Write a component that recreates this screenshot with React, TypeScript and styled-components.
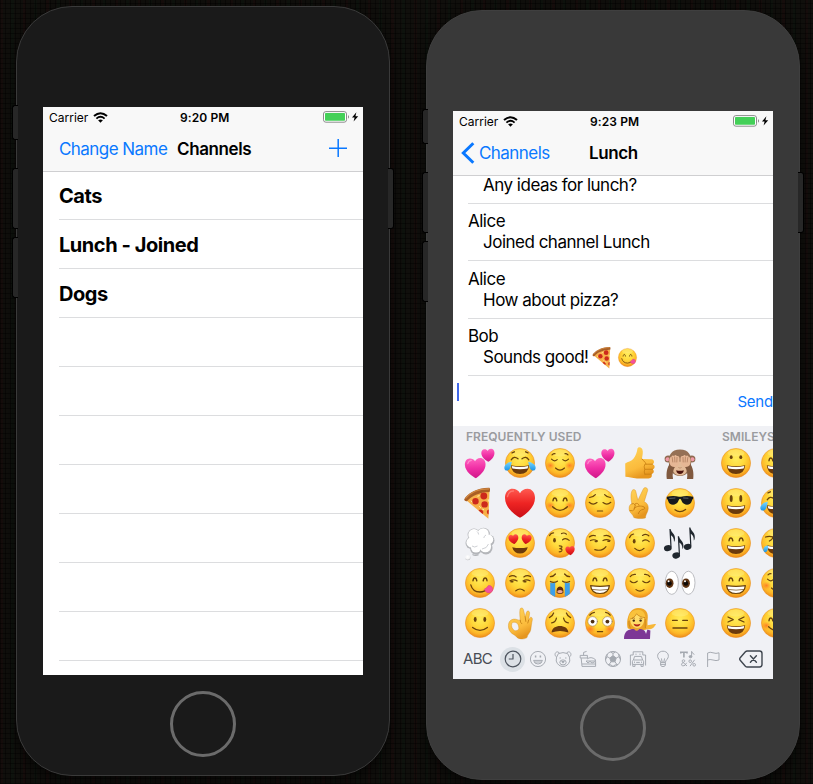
import React from "react";
import styled, { createGlobalStyle } from "styled-components";

const GlobalStyle = createGlobalStyle`
  * { box-sizing: border-box; }
  body {
    margin: 0;
    background: #0d0c0a;
    font-family: Inter, "Liberation Sans", sans-serif;
    color: #000;
    overflow: hidden;
  }
`;

const BLUE = "#0a78ff";

/* ---------- desktop and device ---------- */

const Desktop = styled.main`
  display: flex;
  align-items: flex-start;
  gap: 36px;
  width: 813px;
  height: 784px;
  padding: 6px 0 0 16px;
  background:
    repeating-linear-gradient(90deg, rgba(0, 0, 0, 0.4) 0 1px, transparent 1px 5px),
    repeating-linear-gradient(0deg, rgba(0, 0, 0, 0.4) 0 1px, transparent 1px 5px),
    repeating-linear-gradient(90deg, rgba(60, 0, 10, 0.13) 0 3px, transparent 3px 11px, rgba(0, 40, 20, 0.13) 11px 14px, transparent 14px 23px),
    #100f0c;
`;

const Device = styled.section<{ $body: string; $edge: string; $drop?: number }>`
  position: relative;
  flex: none;
  display: flex;
  flex-direction: column;
  align-items: center;
  width: 374px;
  height: 770px;
  margin-top: ${(p) => p.$drop ?? 0}px;
  padding-top: 100px;
  border: 1px solid ${(p) => p.$edge};
  border-radius: 56px;
  background: ${(p) => p.$body};
  box-shadow: 0 6px 14px rgba(0, 0, 0, 0.55);
`;

const SideButton = styled.span<{ $top: number; $height: number; $right?: boolean }>`
  position: absolute;
  top: ${(p) => p.$top}px;
  ${(p) => (p.$right ? "right: -5px;" : "left: -5px;")}
  width: 6px;
  height: ${(p) => p.$height}px;
  background: #272727;
  border: 1px solid #000;
  ${(p) => (p.$right ? "border-left: 0; border-radius: 0 3px 3px 0;" : "border-right: 0; border-radius: 3px 0 0 3px;")}
`;

const Screen = styled.div`
  display: flex;
  flex-direction: column;
  width: 320px;
  height: 568px;
  flex: none;
  background: #fff;
  overflow: hidden;
`;

const HomeButton = styled.span`
  width: 66px;
  height: 66px;
  margin-top: 16px;
  border: 3px solid #6b6b6b;
  border-radius: 50%;
`;

/* ---------- top bar ---------- */

const TopBar = styled.header`
  flex: none;
  height: 64px;
  background: #f8f8f8;
  box-shadow: 0 1px 0 #cfcfd1;
  z-index: 1;
`;

const StatusRow = styled.div`
  display: grid;
  grid-template-columns: 131px 1fr 44px;
  align-items: center;
  height: 20px;
  padding-left: 6px;
  font-size: 12px;
`;

const Carrier = styled.span`
  display: flex;
  align-items: center;
  gap: 5px;
  letter-spacing: 0;
`;

const Clock = styled.span`
  font-weight: 600;
  letter-spacing: 0.1px;
`;

const NavRow = styled.div<{ $inset: number }>`
  display: flex;
  align-items: center;
  height: 44px;
  padding: 0 16px 0 ${(p) => p.$inset}px;
`;

const NavLink = styled.a<{ $width: number }>`
  width: ${(p) => p.$width}px;
  font-size: 17px;
  letter-spacing: -0.55px;
  white-space: nowrap;
  color: ${BLUE};
`;

const NavTitle = styled.h1`
  margin: 0;
  font-size: 17px;
  font-weight: 600;
  letter-spacing: -0.4px;
`;

const PlusIcon = styled.svg`
  margin: 0 0 2px auto;
`;

const StatusBar = ({ time }: { time: string }) => (
  <StatusRow>
    <Carrier>
      Carrier
      <svg width="15" height="11" viewBox="0 0 15 11" fill="none" stroke="#000">
        <path d="M1 4.1 Q7.5 -1.7 14 4.1" strokeWidth="2" />
        <path d="M3.4 6.6 Q7.5 3.1 11.6 6.6" strokeWidth="1.9" />
        <path d="M5.1 8.3 Q7.5 6.5 9.9 8.3 L7.5 10.7Z" fill="#000" stroke="none" />
      </svg>
    </Carrier>
    <Clock>{time}</Clock>
    <svg width="40" height="12" viewBox="0 0 40 12">
      <rect x="4.5" y="0.6" width="23" height="10.6" rx="2.4" fill="#fff" stroke="#8b8b8b" />
      <rect x="6" y="2.1" width="20" height="7.6" rx="0.8" fill="#44d058" />
      <path d="M29 4 Q31.2 5.9 29 7.8Z" fill="#8b8b8b" />
      <path d="M37.4 1.2 L33 6.5 H35.6 L34.6 10.6 L39.2 5.2 H36.4Z" fill="#000" />
    </svg>
  </StatusRow>
);

/* ---------- channel list ---------- */

const ChannelRow = styled.div`
  flex: none;
  display: flex;
  align-items: center;
  height: 49px;
  margin-left: 16px;
  padding-top: 1px;
  border-bottom: 1px solid #dcdddf;
  font-size: 20px;
  font-weight: 700;
  letter-spacing: -0.45px;
`;

const channels = ["Cats", "Lunch - Joined", "Dogs", "", "", "", "", "", "", ""];

/* ---------- conversation ---------- */

const Message = styled.div<{ $height: number }>`
  flex: none;
  display: flex;
  flex-direction: column;
  justify-content: flex-end;
  height: ${(p) => p.$height}px;
  margin-left: 15px;
  padding-bottom: 8px;
  border-bottom: 1px solid #dcdddf;
  font-size: 17px;
  line-height: 21px;
  letter-spacing: -0.5px;
`;

const MessageText = styled.span`
  display: flex;
  align-items: center;
  height: 20px;
  padding-left: 15px;
`;

const InlineEmoji = styled.svg`
  width: 25px;
  height: 25px;
  margin: 1px 0 0 3px;
  flex: none;

  & + & {
    margin-left: -1px;
  }
`;

const MessageList = styled.div`
  display: flex;
  flex-direction: column;
  padding-top: 1px;
`;

const Composer = styled.div`
  flex: none;
  display: flex;
  justify-content: space-between;
  height: 50px;
  padding: 7px 0 0 4px;
`;

const Caret = styled.span`
  width: 2px;
  height: 18px;
  background: #4168e8;
`;

const SendButton = styled.button`
  align-self: flex-start;
  margin-top: 10px;
  padding: 0;
  border: 0;
  background: none;
  font: 15px/18px Inter, sans-serif;
  letter-spacing: -0.2px;
  color: ${BLUE};
`;

/* ---------- emoji keyboard ---------- */

const Keyboard = styled.div`
  flex: none;
  display: flex;
  flex-direction: column;
  height: 253px;
  background: #f0f1f5;
`;

const Pages = styled.div`
  display: flex;
  gap: 16px;
  padding-left: 7px;
  overflow: hidden;
`;

const PageTitle = styled.h2`
  height: 17px;
  margin: 0;
  padding: 3px 0 0 6px;
  font-size: 12px;
  line-height: 16px;
  font-weight: 600;
  letter-spacing: 0.05px;
  white-space: nowrap;
  color: #9a9b9f;
`;

const EmojiPage = styled.div<{ $columns: number }>`
  flex: none;
  width: ${(p) => p.$columns * 40}px;
`;

const EmojiGrid = styled.div<{ $columns: number }>`
  display: grid;
  grid-template-columns: repeat(${(p) => p.$columns}, 40px);
  grid-auto-rows: 40px;
`;

const Tabs = styled.div`
  display: flex;
  align-items: center;
  height: 32px;
  padding: 0 10px;
`;

const AbcKey = styled.span`
  width: 37px;
  padding-bottom: 2px;
  font-size: 15px;
  letter-spacing: -0.7px;
  color: #474c54;
`;

const Tab = styled.span<{ $active?: boolean }>`
  display: grid;
  place-items: center;
  width: 25px;
  height: 25px;
  border-radius: 50%;
  color: ${(p) => (p.$active ? "#4d545e" : "#a3a8af")};
  background: ${(p) => (p.$active ? "#dce1e6" : "transparent")};
`;

const DeleteIcon = styled.svg`
  margin-left: auto;
`;

const SharedDefs = styled.svg`
  position: absolute;
  width: 0;
  height: 0;
`;

const INK = "#6b430c";

const GradientDefs = () => (
  <SharedDefs>
    <defs>
      <radialGradient id="face" cx="0.5" cy="0.36" r="0.66">
        <stop offset="0" stopColor="#ffec5a" />
        <stop offset="0.45" stopColor="#ffd83a" />
        <stop offset="0.76" stopColor="#fdb728" />
        <stop offset="1" stopColor="#ea8418" />
      </radialGradient>
      <linearGradient id="skin" x1="0" y1="0" x2="0.4" y2="1">
        <stop offset="0" stopColor="#ffd55a" />
        <stop offset="0.7" stopColor="#fbbb3c" />
        <stop offset="1" stopColor="#e6961f" />
      </linearGradient>
      <linearGradient id="red" x1="0" y1="0" x2="0" y2="1">
        <stop offset="0" stopColor="#ff5a50" />
        <stop offset="0.5" stopColor="#ee2423" />
        <stop offset="1" stopColor="#c90e16" />
      </linearGradient>
      <linearGradient id="pink" x1="0" y1="0" x2="0" y2="1">
        <stop offset="0" stopColor="#ff63bf" />
        <stop offset="0.5" stopColor="#f02fa5" />
        <stop offset="1" stopColor="#d01889" />
      </linearGradient>
      <radialGradient id="cloud" cx="0.45" cy="0.35" r="0.65">
        <stop offset="0" stopColor="#ffffff" />
        <stop offset="0.7" stopColor="#f4f4f5" />
        <stop offset="1" stopColor="#b9babd" />
      </radialGradient>
      <radialGradient id="blush">
        <stop offset="0" stopColor="#ff5a1f" stopOpacity="0.65" />
        <stop offset="1" stopColor="#ff7a1f" stopOpacity="0" />
      </radialGradient>
      <linearGradient id="tear" x1="0" y1="0" x2="0" y2="1">
        <stop offset="0" stopColor="#7ad7ff" />
        <stop offset="1" stopColor="#1b94e6" />
      </linearGradient>
    </defs>
  </SharedDefs>
);

const Face = ({ children }: { children?: React.ReactNode }) => (
  <>
    <circle cx="20" cy="20" r="14.6" fill="url(#face)" stroke="#e98a1c" strokeWidth="0.5" />
    <ellipse cx="20" cy="10" rx="8.5" ry="3.6" fill="#fff9a8" opacity="0.3" />
    <g fill="none" stroke={INK} strokeWidth="1.3" strokeLinecap="round" strokeLinejoin="round">
      {children}
    </g>
  </>
);

const Heart = ({ x, y, s, fill, tilt = 0 }: { x: number; y: number; s: number; fill: string; tilt?: number }) => (
  <path
    transform={`translate(${x} ${y}) rotate(${tilt}) scale(${s})`}
    d="M0 14.8 C-5 12.4 -15 4.5 -15 -5 C-15 -10.8 -11.6 -14.2 -7.6 -14.2 C-4.2 -14.2 -1.5 -12.6 0 -9.8 C1.5 -12.6 4.2 -14.2 7.6 -14.2 C11.6 -14.2 15 -10.8 15 -5 C15 4.5 5 12.4 0 14.8Z"
    fill={fill}
    stroke="none"
  />
);

const Blush = () => (
  <g stroke="none" fill="url(#blush)">
    <ellipse cx="10.5" cy="22.5" rx="5" ry="4" />
    <ellipse cx="29.5" cy="22.5" rx="5" ry="4" />
  </g>
);

const OvalEyes = ({ y = 16.5, ry = 2.4 }: { y?: number; ry?: number }) => (
  <g fill={INK} stroke="none">
    <ellipse cx="15.2" cy={y} rx="1.45" ry={ry} />
    <ellipse cx="24.8" cy={y} rx="1.45" ry={ry} />
  </g>
);

const ArchEyes = () => (
  <path d="M13 17.8 C13.4 14 16.2 14 16.8 17.8 M23.2 17.8 C23.8 14 26.6 14 27 17.8" strokeWidth="1.4" />
);

const OpenSmile = () => (
  <>
    <path d="M10.8 22.2 Q20 24.4 29.2 22.2 Q28.4 31 20 31 Q11.6 31 10.8 22.2Z" fill="#6b3a0c" stroke="none" />
    <path d="M11.7 23 Q20 24.9 28.3 23 L27.6 25.4 Q20 27 12.4 25.4Z" fill="#fff" stroke="none" />
  </>
);

const Grin = () => (
  <>
    <path d="M10.6 22.6 Q20 24.2 29.4 22.6 Q28.6 30.5 20 30.5 Q11.4 30.5 10.6 22.6Z" fill="#fff" strokeWidth="1.2" />
    <path d="M11.5 26.4 Q20 28 28.5 26.4" strokeWidth="0.7" />
  </>
);

const Tears = () => (
  <g fill="url(#tear)" stroke="none">
    <path d="M11.8 18.8 C8.5 19 4.4 21.6 4.3 25 C4.4 28.4 9 28.4 10.2 25 C10.9 23 11.5 21 11.8 18.8Z" />
    <path d="M28.2 18.8 C31.5 19 35.6 21.6 35.7 25 C35.6 28.4 31 28.4 29.8 25 C29.1 23 28.5 21 28.2 18.8Z" />
  </g>
);

const Note = ({ x, y }: { x: number; y: number }) => (
  <g transform={`translate(${x} ${y})`} fill="#20272e" stroke="none">
    <ellipse cx="0" cy="0" rx="3.9" ry="3" transform="rotate(-15)" />
    <path d="M2.6 -1 L1.6 -19.3 L2.8 -19.3 C3.4 -15.6 7.6 -14.6 7.2 -9.4 C7.1 -7.8 6.8 -7 6.2 -6.2 C6.4 -10 4.8 -12 3.2 -13 L3.8 -1Z" />
  </g>
);

const emoji: Record<string, React.ReactNode> = {
  hearts: (
    <>
      <Heart x={15.4} y={25} s={0.69} fill="url(#pink)" tilt={-3} />
      <Heart x={28} y={12.2} s={0.44} fill="url(#pink)" tilt={-3} />
      <path d="M7.8 20.6 Q8.6 17.6 11.4 17.4" stroke="#ff8ad0" strokeWidth="1.1" fill="none" strokeLinecap="round" />
    </>
  ),
  joy: (
    <>
      <Face>
        <path d="M11.2 16.8 Q14 12.4 18 15.8 M22 15.8 Q26 12.4 28.8 16.8 M12 9.9 L14.4 8.8 M25.6 8.8 L28 9.9" />
        <OpenSmile />
      </Face>
      <Tears />
    </>
  ),
  relaxed: (
    <Face>
      <Blush />
      <path d="M11.5 16.2 Q14.3 19.2 17.2 16.6 M22.8 16.6 Q25.7 19.2 28.5 16.2 M15.5 25 Q20 29.4 24.5 25 M12 11.8 Q13.2 10.5 15 10.6 M25 10.6 Q26.8 10.5 28 11.8" strokeWidth="1.15" />
    </Face>
  ),
  thumb: (
    <>
      <path d="M5.2 20.5 C8 18.7 11 18.4 13.2 16 C16 12.8 17 9 17.4 5.8 C17.8 3.4 22.6 3.5 22.8 8.5 C22.9 11.5 22 14 22 16 L31.5 16.2 C34.6 16.5 34.7 20.4 32.5 21.2 C35.4 22 35.2 25.8 32.6 26.3 C34.6 27.4 34 30.8 31.4 31.2 C32.6 32.8 31.4 35.3 28.5 35.5 L17 35.5 C12 35.3 9 33.8 5.4 33.8Z" fill="url(#skin)" />
      <path d="M32.5 21.2 H25.5 M32.6 26.3 H25 M31.4 31.2 H25 M22 16 C22.4 18 25.6 18 26 21 M24.7 21.5 Q23.5 24 24.8 26.3 Q23.6 29 24.8 31.2" fill="none" stroke="#c67d12" strokeWidth="0.8" strokeLinecap="round" />
    </>
  ),
  monkey: (
    <>
      <circle cx="8.2" cy="16" r="3.6" fill="#8f6a50" />
      <circle cx="31.8" cy="16" r="3.6" fill="#8f6a50" />
      <circle cx="7.6" cy="16.2" r="2" fill="#f19aa8" />
      <circle cx="32.4" cy="16.2" r="2" fill="#f19aa8" />
      <path d="M20 6.6 C29 6.6 31.5 13 31.2 19 C31 27 27 33 20 33 C13 33 9 27 8.8 19 C8.5 13 11 6.6 20 6.6Z" fill="#947055" />
      <ellipse cx="20" cy="25.5" rx="7.5" ry="7" fill="#e3bb98" />
      <path d="M6.8 36 C6 30 7 24 10.5 20 L15.5 23 C12.8 27 12.2 31 13 36Z M33.2 36 C34 30 33 24 29.5 20 L24.5 23 C27.2 27 27.8 31 27 36Z" fill="#80593f" />
      <path d="M9.8 21 C8.6 17 9.6 14 11.4 13.7 Q12.6 11.6 14.1 13 Q15.6 11.2 16.8 13.1 Q19.2 12.4 19.5 15 C20 19.6 18.4 23.6 15 24 C12.5 24.2 10.8 23.4 9.8 21Z M30.2 21 C31.4 17 30.4 14 28.6 13.7 Q27.4 11.6 25.9 13 Q24.4 11.2 23.2 13.1 Q20.8 12.4 20.5 15 C20 19.6 21.6 23.6 25 24 C27.5 24.2 29.2 23.4 30.2 21Z" fill="#e6b795" />
      <path d="M12.2 14.5 L12.8 19 M14.6 14 L14.9 19 M17 14.4 L16.8 19 M27.8 14.5 L27.2 19 M25.4 14 L25.1 19 M23 14.4 L23.2 19 M18.9 24.4 L19.3 25 M21.1 24.4 L20.7 25" stroke="#a87454" strokeWidth="0.7" strokeLinecap="round" />
      <path d="M16.2 27.2 Q20 28.4 23.8 27.2 Q23.2 31 20 31 Q16.8 31 16.2 27.2Z" fill="#4c150f" />
    </>
  ),
  pizza: (
    <>
      <path d="M6.5 17.5 L28.4 35.8 L29.5 8.5 Q15 9 6.5 17.5Z" fill="#f7b048" />
      <path d="M4.2 16.3 C7 11 17 4.6 29.4 4.8 C30.2 5.5 30.3 8 29.5 8.9 C19 9.4 12 12.5 7 18.2 C5.6 18.6 4.3 17.7 4.2 16.3Z" fill="#a95e24" />
      <path d="M5.5 15.5 C10 9.5 19 5.8 29 5.8" stroke="#d28a43" strokeWidth="1.2" fill="none" />
      <g fill="#cd2a1c">
        <circle cx="23.8" cy="13" r="3.4" />
        <circle cx="15.5" cy="18.3" r="3.2" />
        <circle cx="24.6" cy="21.4" r="3.2" />
        <path d="M28.8 26.4 A2.6 2.6 0 0 0 28.6 31.4Z" />
        <path d="M18.6 27.6 A2.4 2.4 0 0 1 22.6 30.9Z" />
      </g>
      <path d="M17.8 13.2 l1.4 -.5 M19.5 23.5 l1 1 M28.2 16.6 l.2 1.6 M11 18 l1 .8 M22.6 26.2 l1 .4" stroke="#fff0a8" strokeWidth="1" strokeLinecap="round" />
    </>
  ),
  heart: (
    <>
      <Heart x={20} y={20} s={1} fill="url(#red)" />
      <path d="M7.5 13.5 Q8.5 8.2 13.4 8" stroke="#ff9d94" strokeWidth="1.4" fill="none" strokeLinecap="round" opacity="0.55" />
    </>
  ),
  blush: (
    <Face>
      <Blush />
      <ArchEyes />
      <path d="M12.6 23.7 Q20 31 27.4 23.7" />
    </Face>
  ),
  pensive: (
    <Face>
      <path d="M9.2 19.3 Q13 22.6 17 19.6 M23 19.6 Q27 22.6 30.8 19.3 M9.6 14.5 Q13.3 14.2 15.4 11.6 M24.6 11.6 Q26.7 14.2 30.4 14.5 M17.4 28 H22.6" strokeWidth="1.2" />
    </Face>
  ),
  peace: (
    <>
      <path d="M11.8 20.8 C10.8 15.5 10.6 11.5 11.8 8.2 C12.6 5.8 15.6 6.2 15.9 8.8 L17.9 17.2 L23.4 5.8 C24.6 3.6 28.2 4.6 27.6 7.7 L24.2 18.8 C28.3 20.5 29 24.6 27.6 28.4 C26.5 31 25.6 32.2 25.4 35 C21 36 16.5 35.7 13.8 34.5 C13.2 31.5 9.8 30 9.2 26.8 C8.8 24 9.5 21.4 11.8 20.8Z" fill="url(#skin)" stroke="#d18a1d" strokeWidth="0.4" />
      <path d="M11.8 20.8 Q14 19.6 15.2 22 M15.2 20.8 Q18 19.2 19 22.2 M10 27.6 Q13 28.6 14.4 26.4 L15.2 22 M14 25.2 C17 23 21 22.4 24.2 24 Q25.6 25.8 23.6 26.4 Q19.5 26.6 18.4 30.6" fill="none" stroke="#c27a12" strokeWidth="0.8" strokeLinecap="round" />
    </>
  ),
  cool: (
    <Face>
      <path d="M15 26.8 Q20 30.6 25.6 26.4" />
      <path d="M6.8 13.8 Q13.5 12.3 19 13.8 H21 Q26.5 12.3 33.2 13.8 V15.8 Q32.2 16 31.8 18 C31 22.5 24 23 21.9 18.5 Q21 15.8 20 15.8 Q19 15.8 18.1 18.5 C16 23 9 22.5 8.2 18 Q7.8 16 6.8 15.8Z" fill="#15191d" stroke="none" />
      <path d="M9.6 15.4 L15 15 M23.5 15 L28 15.2" stroke="#59626a" strokeWidth="1" />
    </Face>
  ),
  thought: (
    <>
      <g fill="#b4b6ba">
        <circle cx="14" cy="12" r="6.4" /><circle cx="23.5" cy="11" r="6.3" /><circle cx="28.6" cy="17.4" r="5.9" />
        <circle cx="11.4" cy="20" r="5.9" /><circle cx="16" cy="25.9" r="5.8" /><circle cx="26" cy="25" r="6.5" />
      </g>
      <g fill="#fff">
        <circle cx="14" cy="11.7" r="5.7" /><circle cx="23.2" cy="10.7" r="5.5" /><circle cx="28.2" cy="16.5" r="5" />
        <circle cx="11.6" cy="19.4" r="5.2" /><circle cx="16" cy="24.6" r="5" /><circle cx="25.4" cy="23.6" r="5.7" /><circle cx="19.6" cy="17.8" r="8" />
      </g>
      <path d="M12 23 Q14.5 25 17.5 23 M22 26 Q27 25.5 28.5 21 M17 8.5 Q18.5 9.5 18.6 11.5 M26 12 Q24 13 23.8 15" stroke="#cfd1d5" strokeWidth="1" fill="none" />
      <circle cx="7.8" cy="34.6" r="2.6" fill="url(#cloud)" />
      <path d="M12.5 31.4 q3 1.8 6 .2" stroke="#b0b2b6" strokeWidth="1.2" fill="none" />
    </>
  ),
  heartEyes: (
    <Face>
      <Heart x={13.6} y={16.2} s={0.33} fill="url(#red)" tilt={-8} />
      <Heart x={26.4} y={16.2} s={0.33} fill="url(#red)" tilt={8} />
      <path d="M12.2 24.2 Q20 26 27.8 24.2 Q26 30.6 20 30.6 Q14 30.6 12.2 24.2Z" fill="#6b3a0c" stroke="none" />
    </Face>
  ),
  kiss: (
    <Face>
      <ellipse cx="14.5" cy="17.2" rx="1.4" ry="2.3" fill={INK} stroke="none" />
      <path d="M22.6 16.8 Q25.6 14.2 29.2 17.4 M9.6 12.6 Q10.8 9.8 13.6 9.8 M21.5 10.6 Q24 9.2 26.5 11.2 M19.3 22.8 Q22.6 22.8 21.8 24.6 Q21 25.6 19.8 25.6 Q22.6 25.8 21.8 27.8 Q21.2 29 19.2 28.8" strokeWidth="1.15" />
      <Heart x={30.2} y={27.6} s={0.31} fill="url(#red)" tilt={-6} />
    </Face>
  ),
  smirk: (
    <Face>
      <path d="M10.5 17.6 Q14 15.8 17.4 18 M23 17.6 Q26.5 15.8 30 17.6 M9.4 14 Q12 11.4 15.4 12.8 M24 12.8 Q27.6 11.4 30.4 14 M14.8 26.6 Q22 28.8 26 23.6" strokeWidth="1.15" />
      <path d="M15.4 18.4 h1.4 M28 18.2 h1.4" strokeWidth="1.6" />
    </Face>
  ),
  wink: (
    <Face>
      <ellipse cx="14.2" cy="18.2" rx="1.4" ry="2.2" fill={INK} stroke="none" />
      <path d="M22.6 18 Q26 15.6 29.2 18.6 M9.6 14.6 Q10.6 11.6 13.6 11 M22.5 12.4 Q26 10.2 28.8 12.8 M14.8 25.4 Q19.4 29.8 24 25.4" strokeWidth="1.2" />
    </Face>
  ),
  notes: (
    <>
      <Note x={7.8} y={25.2} />
      <Note x={16.2} y={32.5} />
      <Note x={27.6} y={23.8} />
    </>
  ),
  yum: (
    <Face>
      <ArchEyes />
      <path d="M10.8 21.8 Q12.6 28.8 20 29 Q24.6 29 27.5 25.5" />
      <path d="M24.4 26.2 Q26.6 25.4 28.4 22.6 C31.2 22 33.6 25 32.4 28 C31 30.4 27.4 30.4 25.6 28.6Z" fill="#f4519b" stroke="#d93b82" strokeWidth="0.5" />
    </Face>
  ),
  unamused: (
    <Face>
      <path d="M10 17.8 Q13.5 15.8 17.2 18 M23 18 Q26.5 15.8 30 17.8 M9.6 13.6 Q13 11.6 16.2 14 M23.8 14 Q27 11.6 30.4 13.6 M15.8 27.8 Q20 24.2 24.2 27.8" strokeWidth="1.15" />
      <path d="M11 18.8 h1.8 M24 18.8 h1.8" strokeWidth="1.6" />
    </Face>
  ),
  sob: (
    <Face>
      <path d="M10.4 18.5 Q14 20.4 17.4 18.2 M22.6 18.2 Q26 20.4 29.6 18.5 M10.4 13.6 Q13.6 13.4 15.4 11 M24.6 11 Q26.4 13.4 29.6 13.6" />
      <path d="M10.2 19.5 Q12.8 20.8 15.2 19.6 V33.7 Q12.4 32.8 10.2 30.8Z M24.8 19.6 Q27.2 20.8 29.8 19.5 V30.8 Q27.4 32.8 24.8 33.7Z" fill="#3d9fe8" stroke="none" />
      <path d="M16.6 30 Q16 23.4 20 23.4 Q24 23.4 23.4 30 Q20 31.8 16.6 30Z" fill="#5f2c0a" stroke="none" />
      <path d="M17.4 28 Q20 26 22.6 28 L22.5 29.6 Q20 30.8 17.5 29.6Z" fill="#e8a79a" stroke="none" />
    </Face>
  ),
  grin: (
    <Face>
      <ArchEyes />
      <Grin />
    </Face>
  ),
  relieved: (
    <Face>
      <path d="M10.2 18 Q13.6 21.4 17.2 18.2 M22.8 18.2 Q26.4 21.4 29.8 18 M10.2 13.6 Q12 11 15.4 11.4 M24.6 11.4 Q28 11 29.8 13.6 M16 26.6 Q20 29.8 24 26.6" strokeWidth="1.15" />
    </Face>
  ),
  eyes: (
    <>
      <g fill="#fff" stroke="#b4b6ba" strokeWidth="0.9">
        <ellipse cx="11.8" cy="19.8" rx="6.6" ry="11.6" />
        <ellipse cx="28.4" cy="19.8" rx="6.6" ry="11.6" />
      </g>
      <g fill="#5f3413">
        <ellipse cx="9.6" cy="20.2" rx="3.9" ry="4.8" />
        <ellipse cx="26" cy="20.2" rx="3.9" ry="4.8" />
      </g>
      <g fill="#0e0906">
        <circle cx="9.4" cy="20.4" r="2.4" />
        <circle cx="25.8" cy="20.4" r="2.4" />
      </g>
      <circle cx="8.6" cy="18.2" r="1" fill="#fff" />
      <circle cx="25" cy="18.2" r="1" fill="#fff" />
    </>
  ),
  smile: (
    <Face>
      <OvalEyes />
      <path d="M12.6 24.4 Q20 30.2 27.4 24.4" />
    </Face>
  ),
  okHand: (
    <>
      <path
        d="M20.2 17.2 C20 13.4 19.4 10 20 6.4 C20.4 4.4 23 4.6 23.4 6.6 L25.2 14 C26 11.6 26 9.2 27.2 8.2 C28.6 7.4 29.8 8.8 29.6 10.4 L28.6 17.2 C29.4 16 29.8 14.4 30.8 14.2 C32 14.2 32.6 15.6 32.3 17 C31.6 20.4 31.4 22 31 25 C30.8 29 28.6 30.6 27.6 32.6 L27 34.6 C24 36.6 19.4 36.2 17 34.4 C15.6 32 12.4 31.4 10.6 29.2 C8.4 26.6 8 23 8.8 20 C9.6 17.2 13 15.6 15.6 16.2 C17.6 16.6 19 17.4 20.2 17.2Z M11.8 20.6 C11 23 12 26 14.4 27.4 C16.2 28.2 18.2 27.6 18.8 25.8 C19 23.4 18.2 21.2 16.8 20 C15.2 18.8 12.4 18.8 11.8 20.6Z"
        fill="url(#skin)" fillRule="evenodd" stroke="#d18a1d" strokeWidth="0.4"
      />
      <path d="M25.2 14 L25.8 18.4 M28.6 17.2 L27.8 20 M20.2 17.2 Q20 19.6 21.8 20.8" stroke="#c27a12" strokeWidth="0.8" fill="none" strokeLinecap="round" />
    </>
  ),
  weary: (
    <Face>
      <path d="M11.6 19.8 Q15.6 19.6 16.4 15.2 M28.4 19.8 Q24.4 19.6 23.6 15.2 M9.4 14.6 Q12.6 13.2 13.6 10 M30.6 14.6 Q27.4 13.2 26.4 10" strokeWidth="1.25" />
      <path d="M11.6 29.4 C12 20.8 28 20.8 28.4 29.4 Q20 26.4 11.6 29.4Z" fill="#6b3a0c" stroke="none" />
    </Face>
  ),
  flushed: (
    <Face>
      <g stroke="none" fill="url(#blush)">
        <ellipse cx="10.5" cy="26" rx="5.5" ry="4.5" /><ellipse cx="29.5" cy="26" rx="5.5" ry="4.5" />
      </g>
      <path d="M9.8 12.2 Q11.4 9.6 14.4 9.4 M25.6 9.4 Q28.6 9.6 30.2 12.2 M17.4 28.6 H22.6" strokeWidth="1.25" />
      <g fill="#fff" stroke="#9c7a45" strokeWidth="0.6">
        <circle cx="12.6" cy="18.4" r="4.8" /><circle cx="27.4" cy="18.4" r="4.8" />
      </g>
      <g fill="#4f3012" stroke="none">
        <circle cx="12.6" cy="18.6" r="1.9" /><circle cx="27.4" cy="18.6" r="1.9" />
      </g>
    </Face>
  ),
  woman: (
    <>
      <path d="M8 25.6 C6 20 7.6 5 18 5 C27 5 28.6 11 27.6 17 C27 21 28.4 23 26.6 26.4 L18 28Z" fill="#eda526" />
      <path d="M4 36 C4 29.5 7 26.8 12 26 L20.5 26 C24.5 26.6 25.4 28.4 26 31 L27.4 26.6 L30.4 27.6 L30 36Z" fill="#7d3796" />
      <path d="M14.4 23 h4.6 v3.6 q-2.4 2.4 -4.6 0Z" fill="#e8a536" />
      <path d="M10.2 16 C10.4 11.6 14 9.6 18 10 C22.6 10.2 24.6 13 24.2 17 C23.8 21.6 20.8 25 17.2 25 C13.4 25 10.2 21.4 10.2 16Z" fill="#ffdc68" />
      <path d="M8.8 18 C8 9.6 13 6.8 18.6 6.8 C22 7 25 9.4 25.4 14.6 C21.4 14.4 18.4 13 16.6 10.8 C15.2 13.6 12 15.8 10.2 16Z" fill="#f9c23c" />
      <path d="M10.2 16 C12 15.8 15.2 13.6 16.6 10.8 C18.4 13 21.4 14.4 25 14.6 M9 18 Q8.6 22 10.4 25.4 M25.2 16 Q25 21 25.4 25" stroke="#c27c14" strokeWidth="0.7" fill="none" />
      <path d="M11.8 15.6 q1.6 -1.2 3.2 -.3 M19.4 15.4 q1.6 -.8 3 .3" stroke="#a56a18" strokeWidth="0.8" fill="none" />
      <circle cx="13.8" cy="17.6" r="1.2" fill="#3d2410" />
      <circle cx="20.6" cy="17.6" r="1.2" fill="#3d2410" />
      <path d="M13.4 20.8 Q17 22.4 20.6 20.8 Q19.6 23.6 17 23.6 Q14.4 23.6 13.4 20.8Z" fill="#b0231c" />
      <path d="M26.8 26.2 C25.8 24 25.6 22.4 27.6 22.2 L34.6 21 C36.2 20.8 36.6 21.8 35 22.4 C34 24.6 32.4 25.4 30.2 26.2Z" fill="#f7b737" />
    </>
  ),
  expressionless: (
    <Face>
      <path d="M12.6 17.4 H17.2 M22.8 17.4 H27.4 M13 25 H27" strokeWidth="1.4" />
    </Face>
  ),
  grinning: (
    <Face>
      <OvalEyes y={14.2} ry={1.9} />
      <OpenSmile />
    </Face>
  ),
  smiley: (
    <Face>
      <OvalEyes y={15.6} ry={3.5} />
      <OpenSmile />
    </Face>
  ),
  smileEyes: (
    <Face>
      <ArchEyes />
      <OpenSmile />
    </Face>
  ),
  rofl: (
    <>
      <Face>
        <path d="M9.6 14 Q13.4 12.6 17 14 Q16.6 16.4 13.4 18" />
        <OpenSmile />
      </Face>
      <path d="M12 22.6 C8 22.4 6.4 26.6 8 28.8 C10.2 30.4 12.6 27.6 12 22.6Z" fill="url(#tear)" />
    </>
  ),
  laughing: (
    <Face>
      <path d="M12 14 L17.2 16.6 L12 19 M28 14 L22.8 16.6 L28 19" strokeWidth="1.25" />
      <OpenSmile />
    </Face>
  ),
};

const frequentlyUsed = [
  "hearts", "joy", "relaxed", "hearts", "thumb", "monkey",
  "pizza", "heart", "blush", "pensive", "peace", "cool",
  "thought", "heartEyes", "kiss", "smirk", "wink", "notes",
  "yum", "unamused", "sob", "grin", "relieved", "eyes",
  "smile", "okHand", "weary", "flushed", "woman", "expressionless",
];

const smileys = [
  "grinning", "smileEyes",
  "smiley", "joy",
  "smileEyes", "rofl",
  "grin", "relaxed",
  "laughing", "blush",
];

const EmojiKeys = ({ names, columns }: { names: string[]; columns: number }) => (
  <EmojiGrid $columns={columns}>
    {names.map((name, i) => (
      <svg key={i} width="40" height="40" viewBox="0 0 40 40">{emoji[name]}</svg>
    ))}
  </EmojiGrid>
);

const tabIcons: React.ReactNode[] = [
  <><circle cx="9" cy="9" r="7.8" strokeWidth="1.2" /><path d="M9 4 V9 H4.8" strokeWidth="1.2" /></>,
  <><circle cx="9" cy="9" r="7.6" /><path d="M4.6 10.4 H13.4 Q12.8 14 9 14 Q5.2 14 4.6 10.4Z M5.6 12 H12.4" /><path d="M6.6 5.6 V7.6 M11.4 5.6 V7.6" strokeWidth="1.5" /></>,
  <><path d="M4.4 3.6 Q9 1.6 13.6 3.6 Q16.2 7 15.8 11 Q14 16.4 9 16.4 Q4 16.4 2.2 11 Q1.8 7 4.4 3.6Z" /><path d="M2.6 7.2 C-0.4 5 1.4 1 4.4 2 L5.2 3.2 M15.4 7.2 C18.4 5 16.6 1 13.6 2 L12.8 3.2" /><ellipse cx="9" cy="12.4" rx="3.2" ry="2.5" /><path d="M8 11.6 H10 L9 12.6Z M6.2 7.4 V8.6 M11.8 7.4 V8.6" strokeWidth="1.3" /></>,
  <><path d="M2.2 8.2 L3 16.4 H16.6 V14 H3 M1.2 5.4 H8.4 V8 H1.2Z M4.6 5.2 V2.4 L7.6 1.4 M8 9 Q12 6 16.4 9.6 V11 H7 M7 11 L9 13 L11 11.4 L13 13 L16.6 11.4 V14" /></>,
  <><circle cx="9" cy="9" r="7.6" /><path d="M9 5.6 L12.2 8 L11 11.8 H7 L5.8 8Z" fill="currentColor" /><path d="M9 5.6 V3 M12.2 8 L15.2 6.6 M11 11.8 L13 14.6 M7 11.8 L5 14.6 M5.8 8 L2.8 6.6" /><path d="M6.6 2.2 L9 3.2 L11.4 2.2 M1.6 9.8 L2.8 6.8 L3.4 4 M16.4 9.8 L15.2 6.8 L14.6 4 M4 14.4 L7 15 L9 16.4 L11 15 L14 14.4" /></>,
  <><path d="M1.4 15.5 V5 H4.2 V1.8 H13.8 V5 H16.6 V15.5 M6.4 4.2 H7.6 M10.4 4.2 H11.6" /><path d="M4.4 10 L5.6 6.4 H12.4 L13.6 10 Q14.6 10.4 14.6 11.6 V14.4 H3.4 V11.6 Q3.4 10.4 4.4 10Z H13.6 M3.8 14.4 V16.4 H6 V14.4 M12 14.4 V16.4 H14.2 V14.4 M7.2 12.4 H10.8" /><path d="M5.2 12.2 h.8 M12 12.2 h.8" strokeWidth="1.5" /></>,
  <><path d="M6.6 12.4 Q6.4 10.8 5 9.4 C1.8 5.6 4.6 1.2 9 1.2 C13.4 1.2 16.2 5.6 13 9.4 Q11.6 10.8 11.4 12.4Z M6.6 12.4 V15 Q6.8 16.6 9 16.6 Q11.2 16.6 11.4 15 V12.4 M6.6 14.4 H11.4 M8.2 12.2 L7.4 8.4 M9.8 12.2 L10.6 8.4" /></>,
  <><path d="M1.8 2.2 H8 M1.8 1.6 V3.6 M8 1.6 V3.6 M4.9 2 V7.4" strokeWidth="1.6" /><path d="M12.6 6.6 V1.4 Q13 3.4 15.4 4.4" /><ellipse cx="11.5" cy="6.7" rx="1.4" ry="1.1" fill="currentColor" /><path d="M8 16 L3.2 11.6 Q2.8 9.8 4.6 9.8 Q6.4 10 5.6 11.6 L3 13.2 Q1.8 15.2 3.6 16 Q6.4 16.2 7.6 12.8" /><path d="M15.6 9.8 L11 16.2" /><circle cx="11.2" cy="11.2" r="1.3" /><circle cx="15.2" cy="14.8" r="1.3" /></>,
  <><path d="M3.6 17 V3 Q6 1.6 9 2.8 Q12 4 15 2.8 V10 Q12 11.2 9 10 Q6 9 3.6 10" /></>,
];

const EmojiKeyboard = () => (
  <Keyboard>
    <Pages>
      <EmojiPage $columns={6}>
        <PageTitle>FREQUENTLY USED</PageTitle>
        <EmojiKeys names={frequentlyUsed} columns={6} />
      </EmojiPage>
      <EmojiPage $columns={2}>
        <PageTitle>SMILEYS</PageTitle>
        <EmojiKeys names={smileys} columns={2} />
      </EmojiPage>
    </Pages>
    <Tabs>
      <AbcKey>ABC</AbcKey>
      {tabIcons.map((icon, i) => (
        <Tab key={i} $active={i === 0}>
          <svg width="18" height="18" viewBox="0 0 18 18" fill="none" stroke="currentColor" strokeWidth="0.95" strokeLinejoin="round">
            {icon}
          </svg>
        </Tab>
      ))}
      <DeleteIcon width="24" height="18" viewBox="0 0 24 18" fill="none" stroke="#3f464f" strokeWidth="1.4" strokeLinejoin="round" strokeLinecap="round">
        <path d="M8.2 1 H20.6 Q23 1 23 3.4 V14.6 Q23 17 20.6 17 H8.2 Q7.2 17 6.4 16.2 L1 10 Q0.4 9 1 8 L6.4 1.8 Q7.2 1 8.2 1Z" />
        <path d="M11.4 5.8 L17.4 12.2 M17.4 5.8 L11.4 12.2" />
      </DeleteIcon>
    </Tabs>
  </Keyboard>
);

const DeviceFrame = ({ body, edge, drop, children }: { body: string; edge: string; drop?: number; children: React.ReactNode }) => (
  <Device $body={body} $edge={edge} $drop={drop}>
    <SideButton $top={98} $height={35} />
    <SideButton $top={161} $height={61} />
    <SideButton $top={230} $height={61} />
    <SideButton $top={161} $height={61} $right />
    <Screen>{children}</Screen>
    <HomeButton />
  </Device>
);

export default function App() {
  return (
    <>
      <GlobalStyle />
      <GradientDefs />
      <Desktop>
        <DeviceFrame body="#1a1a1a" edge="#3a3a3a">
          <TopBar>
            <StatusBar time="9:20 PM" />
            <NavRow $inset={16}>
              <NavLink $width={118}>Change Name</NavLink>
              <NavTitle>Channels</NavTitle>
              <PlusIcon width="18" height="18" viewBox="0 0 18 18" stroke={BLUE} strokeWidth="1.5">
                <path d="M9.2 0 V18 M0 9.2 H18" />
              </PlusIcon>
            </NavRow>
          </TopBar>
          {channels.map((name, i) => (
            <ChannelRow key={i}>{name}</ChannelRow>
          ))}
        </DeviceFrame>
        <DeviceFrame body="#393939" edge="#3f3f3f" drop={4}>
          <TopBar>
            <StatusBar time="9:23 PM" />
            <NavRow $inset={8}>
              <svg width="18" height="22" viewBox="0 0 18 22" fill="none" stroke={BLUE} strokeWidth="3">
                <path d="M12.3 1.2 L2.3 11 L12.3 20.8" />
              </svg>
              <NavLink $width={110}>Channels</NavLink>
              <NavTitle>Lunch</NavTitle>
            </NavRow>
          </TopBar>
          <MessageList>
            <Message $height={28}>
              <MessageText>Any ideas for lunch?</MessageText>
            </Message>
            <Message $height={57}>
              Alice
              <MessageText>Joined channel Lunch</MessageText>
            </Message>
            <Message $height={58}>
              Alice
              <MessageText>How about pizza?</MessageText>
            </Message>
            <Message $height={57}>
              Bob
              <MessageText>
                Sounds good!
                <InlineEmoji viewBox="2 2 36 36">{emoji.pizza}</InlineEmoji>
                <InlineEmoji viewBox="0 0 40 40">{emoji.yum}</InlineEmoji>
              </MessageText>
            </Message>
          </MessageList>
          <Composer>
            <Caret />
            <SendButton>Send</SendButton>
          </Composer>
          <EmojiKeyboard />
        </DeviceFrame>
      </Desktop>
    </>
  );
}
